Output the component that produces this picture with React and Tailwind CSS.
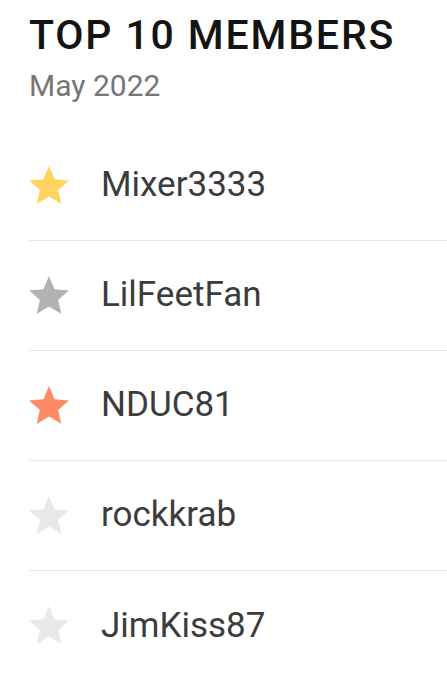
import React from "react";

const members = [
  { name: "Mixer3333", color: "#ffd460" },
  { name: "LilFeetFan", color: "#b3b3b3" },
  { name: "NDUC81", color: "#ff8a68" },
  { name: "rockkrab", color: "#e8e8e8" },
  { name: "JimKiss87", color: "#e8e8e8" },
];

const Star = ({ color }) => (
  <svg width="48" height="48" viewBox="0 0 24 24" className="shrink-0 -ml-[4px]">
    <path
      fill={color}
      d="M12 17.27 18.18 21l-1.64-7.03L22 9.24l-7.19-.61L12 2 9.19 8.63 2 9.24l5.46 4.73L5.82 21z"
    />
  </svg>
);

const App = () => {
  return (
    <div
      className="w-[447px] h-[680px] overflow-hidden bg-white pl-[29px]"
      style={{ fontFamily: "Roboto, 'Liberation Sans', sans-serif" }}
    >
      <h1 className="pt-[15px] text-[41px] leading-[41px] font-medium tracking-[0.045em] text-[#141414] whitespace-nowrap">
        TOP 10 MEMBERS
      </h1>
      <p className="mt-[15px] text-[30px] leading-[30px] text-[#767676]">May 2022</p>

      <ul className="mt-[30px]">
        {members.map((m, i) => (
          <li
            key={i}
            className={`flex items-center h-[110px] gap-[28px] ${
              i < members.length - 1 ? "border-b border-[#e6e6e6]" : ""
            }`}
          >
            <Star color={m.color} />
            <span className="text-[35px] text-[#3c3c3c]">{m.name}</span>
          </li>
        ))}
      </ul>
    </div>
  );
};

export default App;
